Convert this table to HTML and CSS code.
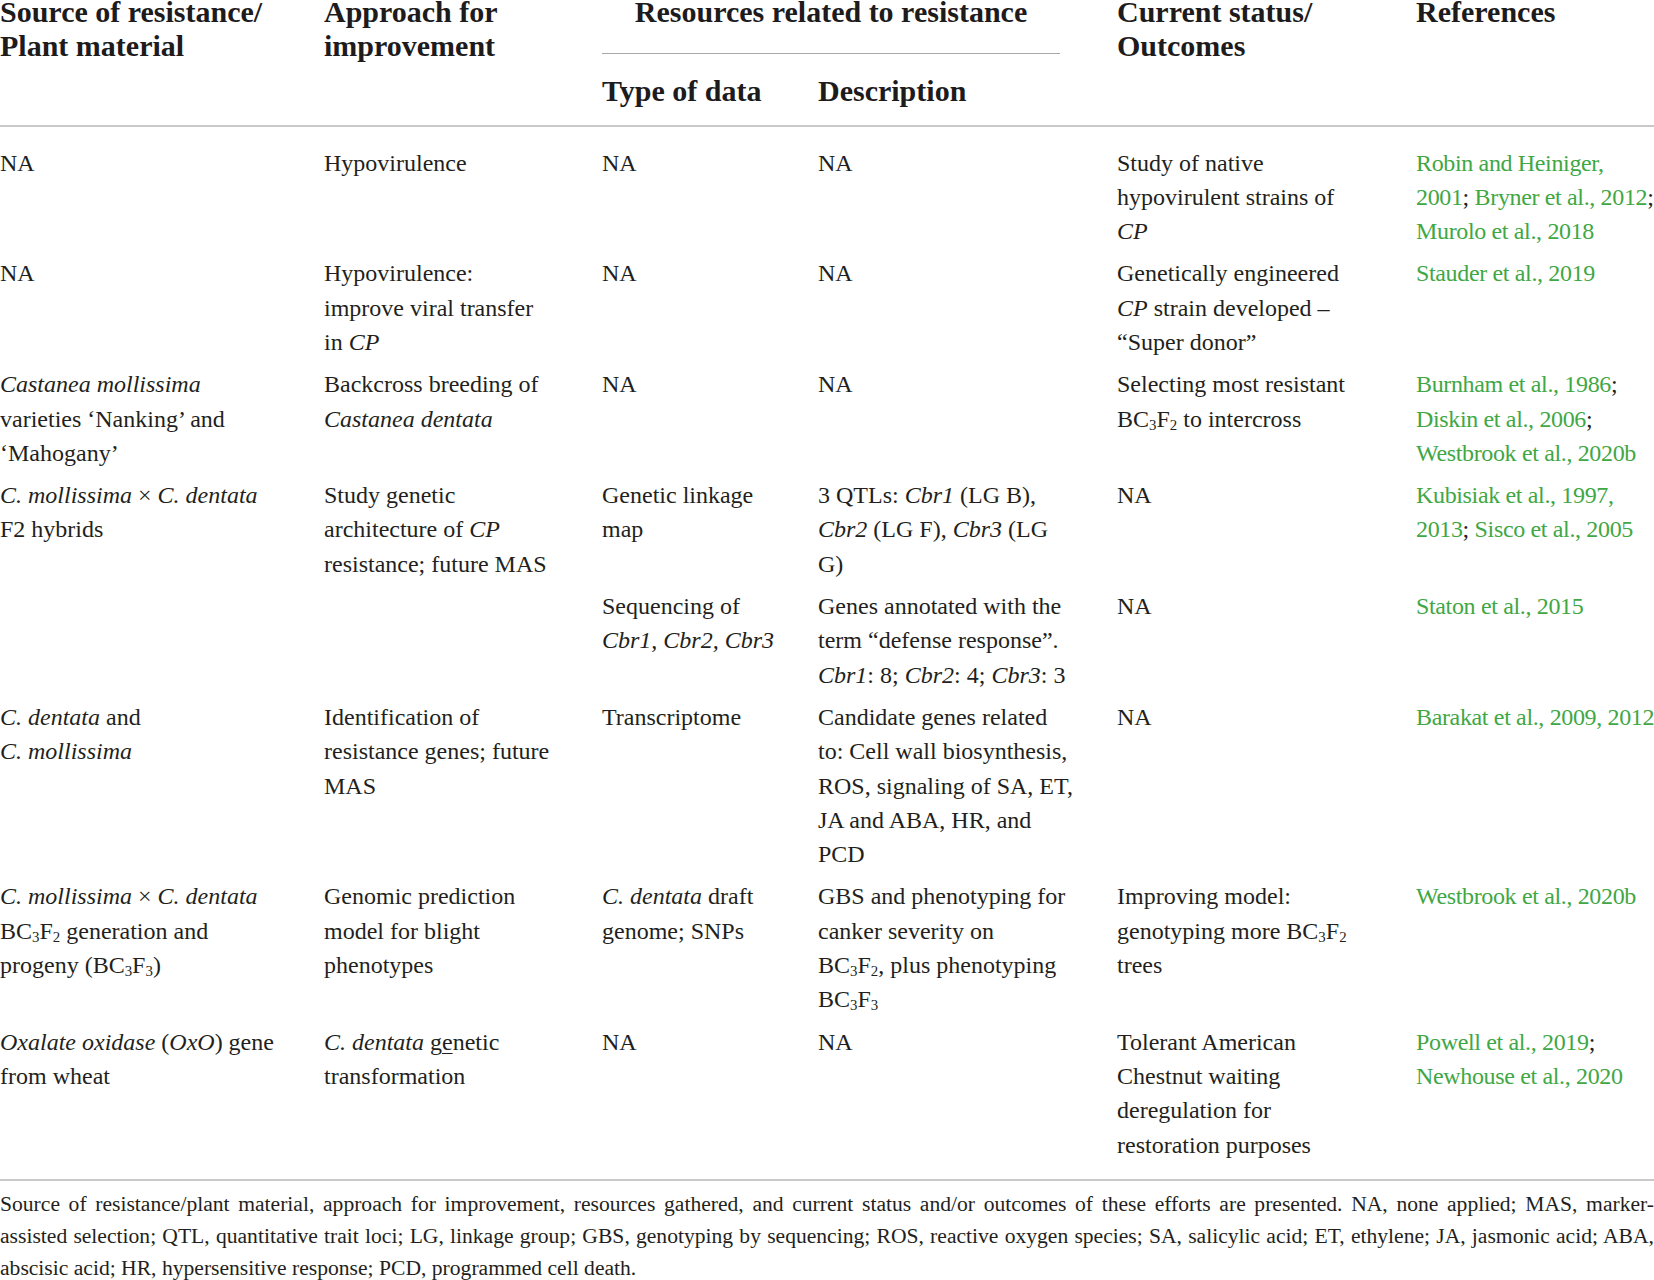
FILE: index.html
```html
<!DOCTYPE html>
<html lang="en">
<head>
<meta charset="utf-8">
<title>Chestnut blight resistance</title>
<link rel="stylesheet" href="styles.css">
</head>
<body>
<table class="tbl">
  <colgroup>
    <col class="c1"><col class="c2"><col class="c3"><col class="c4"><col class="c5"><col class="c6">
  </colgroup>
  <thead>
    <tr class="ha">
      <th rowspan="2">Source of resistance/<br>Plant material</th>
      <th rowspan="2">Approach for<br>improvement</th>
      <th colspan="2" class="group"><div class="group-label">Resources related to resistance</div></th>
      <th rowspan="2">Current status/<br>Outcomes</th>
      <th rowspan="2">References</th>
    </tr>
    <tr class="hb">
      <th>Type of data</th>
      <th>Description</th>
    </tr>
  </thead>
  <tbody>
    <tr>
      <td>NA</td>
      <td>Hypovirulence</td>
      <td>NA</td>
      <td>NA</td>
      <td>Study of native<br>hypovirulent strains of<br><i>CP</i></td>
      <td class="ref"><span class="lk">Robin and Heiniger,</span><br><span class="lk">2001</span>; <span class="lk">Bryner et al., 2012</span>;<br><span class="lk">Murolo et al., 2018</span></td>
    </tr>
    <tr>
      <td>NA</td>
      <td>Hypovirulence:<br>improve viral transfer<br>in <i>CP</i></td>
      <td>NA</td>
      <td>NA</td>
      <td>Genetically engineered<br><i>CP</i> strain developed –<br>“Super donor”</td>
      <td class="ref"><span class="lk">Stauder et al., 2019</span></td>
    </tr>
    <tr>
      <td><i>Castanea mollissima</i><br>varieties ‘Nanking’ and<br>‘Mahogany’</td>
      <td>Backcross breeding of<br><i>Castanea dentata</i></td>
      <td>NA</td>
      <td>NA</td>
      <td>Selecting most resistant<br>BC<sub>3</sub>F<sub>2</sub> to intercross</td>
      <td class="ref"><span class="lk">Burnham et al., 1986</span>;<br><span class="lk">Diskin et al., 2006</span>;<br><span class="lk">Westbrook et al., 2020b</span></td>
    </tr>
    <tr>
      <td rowspan="2"><i>C. mollissima</i> × <i>C. dentata</i><br>F2 hybrids</td>
      <td rowspan="2">Study genetic<br>architecture of <i>CP</i><br>resistance; future MAS</td>
      <td>Genetic linkage<br>map</td>
      <td>3 QTLs: <i>Cbr1</i> (LG B),<br><i>Cbr2</i> (LG F), <i>Cbr3</i> (LG<br>G)</td>
      <td>NA</td>
      <td class="ref"><span class="lk">Kubisiak et al., 1997,</span><br><span class="lk">2013</span>; <span class="lk">Sisco et al., 2005</span></td>
    </tr>
    <tr>
      <td>Sequencing of<br><i>Cbr1, Cbr2, Cbr3</i></td>
      <td>Genes annotated with the<br>term “defense response”.<br><i>Cbr1</i>: 8; <i>Cbr2</i>: 4; <i>Cbr3</i>: 3</td>
      <td>NA</td>
      <td class="ref"><span class="lk">Staton et al., 2015</span></td>
    </tr>
    <tr>
      <td><i>C. dentata</i> and<br><i>C. mollissima</i></td>
      <td>Identification of<br>resistance genes; future<br>MAS</td>
      <td>Transcriptome</td>
      <td>Candidate genes related<br>to: Cell wall biosynthesis,<br>ROS, signaling of SA, ET,<br>JA and ABA, HR, and<br>PCD</td>
      <td>NA</td>
      <td class="ref"><span class="lk">Barakat et al., 2009, 2012</span></td>
    </tr>
    <tr>
      <td><i>C. mollissima</i> × <i>C. dentata</i><br>BC<sub>3</sub>F<sub>2</sub> generation and<br>progeny (BC<sub>3</sub>F<sub>3</sub>)</td>
      <td>Genomic prediction<br>model for blight<br>phenotypes</td>
      <td><i>C. dentata</i> draft<br>genome; SNPs</td>
      <td>GBS and phenotyping for<br>canker severity on<br>BC<sub>3</sub>F<sub>2</sub>, plus phenotyping<br>BC<sub>3</sub>F<sub>3</sub></td>
      <td>Improving model:<br>genotyping more BC<sub>3</sub>F<sub>2</sub><br>trees</td>
      <td class="ref"><span class="lk">Westbrook et al., 2020b</span></td>
    </tr>
    <tr>
      <td><i>Oxalate oxidase</i> (<i>OxO</i>) gene<br>from wheat</td>
      <td><i>C. dentata</i> <span class="ul">ge</span>netic<br>transformation</td>
      <td>NA</td>
      <td>NA</td>
      <td>Tolerant American<br>Chestnut waiting<br>deregulation for<br>restoration purposes</td>
      <td class="ref"><span class="lk">Powell et al., 2019</span>;<br><span class="lk">Newhouse et al., 2020</span></td>
    </tr>
  </tbody>
</table>
<div class="caption">
  <span class="cap-line">Source of resistance/plant material, approach for improvement, resources gathered, and current status and/or outcomes of these efforts are presented. NA, none applied; MAS, marker-</span>
  <span class="cap-line">assisted selection; QTL, quantitative trait loci; LG, linkage group; GBS, genotyping by sequencing; ROS, reactive oxygen species; SA, salicylic acid; ET, ethylene; JA, jasmonic acid; ABA,</span>
  <span class="cap-line cap-last">abscisic acid; HR, hypersensitive response; PCD, programmed cell death.</span>
</div>
</body>
</html>
```

FILE: styles.css
```css
html, body {
  margin: 0;
  padding: 0;
  background: #ffffff;
  overflow: hidden;
}

body {
  font-family: "Liberation Serif", "Times New Roman", serif;
  color: #231f20;
  width: 1654px;
}

.tbl {
  width: 1654px;
  border-collapse: collapse;
  table-layout: fixed;
  margin-top: -5px;
}

.c1 { width: 324px; }
.c2 { width: 278px; }
.c3 { width: 216px; }
.c4 { width: 299px; }
.c5 { width: 299px; }
.c6 { width: 238px; }

th, td {
  padding: 0;
  text-align: left;
  vertical-align: top;
  white-space: nowrap;
}

thead {
  border-bottom: 2px solid #c9c9c9;
}

thead th {
  font-size: 30px;
  line-height: 33.75px;
  font-weight: bold;
  color: #1d1b1c;
}

.ha th.group {
  padding-bottom: 0;
}

.group-label {
  margin-right: 57px;
  padding-bottom: 24px;
  border-bottom: 1.5px solid #a8a8a8;
  text-align: center;
}

.hb th {
  padding-top: 20px;
  padding-bottom: 17px;
}

tbody {
  border-bottom: 2px solid #c9c9c9;
}

tbody td {
  font-size: 24px;
  line-height: 34.3px;
  padding: 4px 0 4px 0;
}

tbody tr:first-child td {
  padding-top: 19px;
}

tbody tr:last-child td {
  padding-bottom: 17px;
}

td.ref {
  letter-spacing: -0.35px;
}

.lk {
  color: #3fa744;
}

sub {
  font-size: 0.62em;
  vertical-align: -0.22em;
  line-height: 0;
}

.ul {
  text-decoration: underline;
  text-underline-offset: 3px;
  text-decoration-thickness: 1px;
}

.caption {
  padding-top: 7px;
  font-size: 21.6px;
  line-height: 32px;
  color: #231f20;
}

.cap-line {
  display: block;
  text-align: justify;
  text-align-last: justify;
}

.cap-line.cap-last {
  text-align: left;
  text-align-last: left;
}
```
